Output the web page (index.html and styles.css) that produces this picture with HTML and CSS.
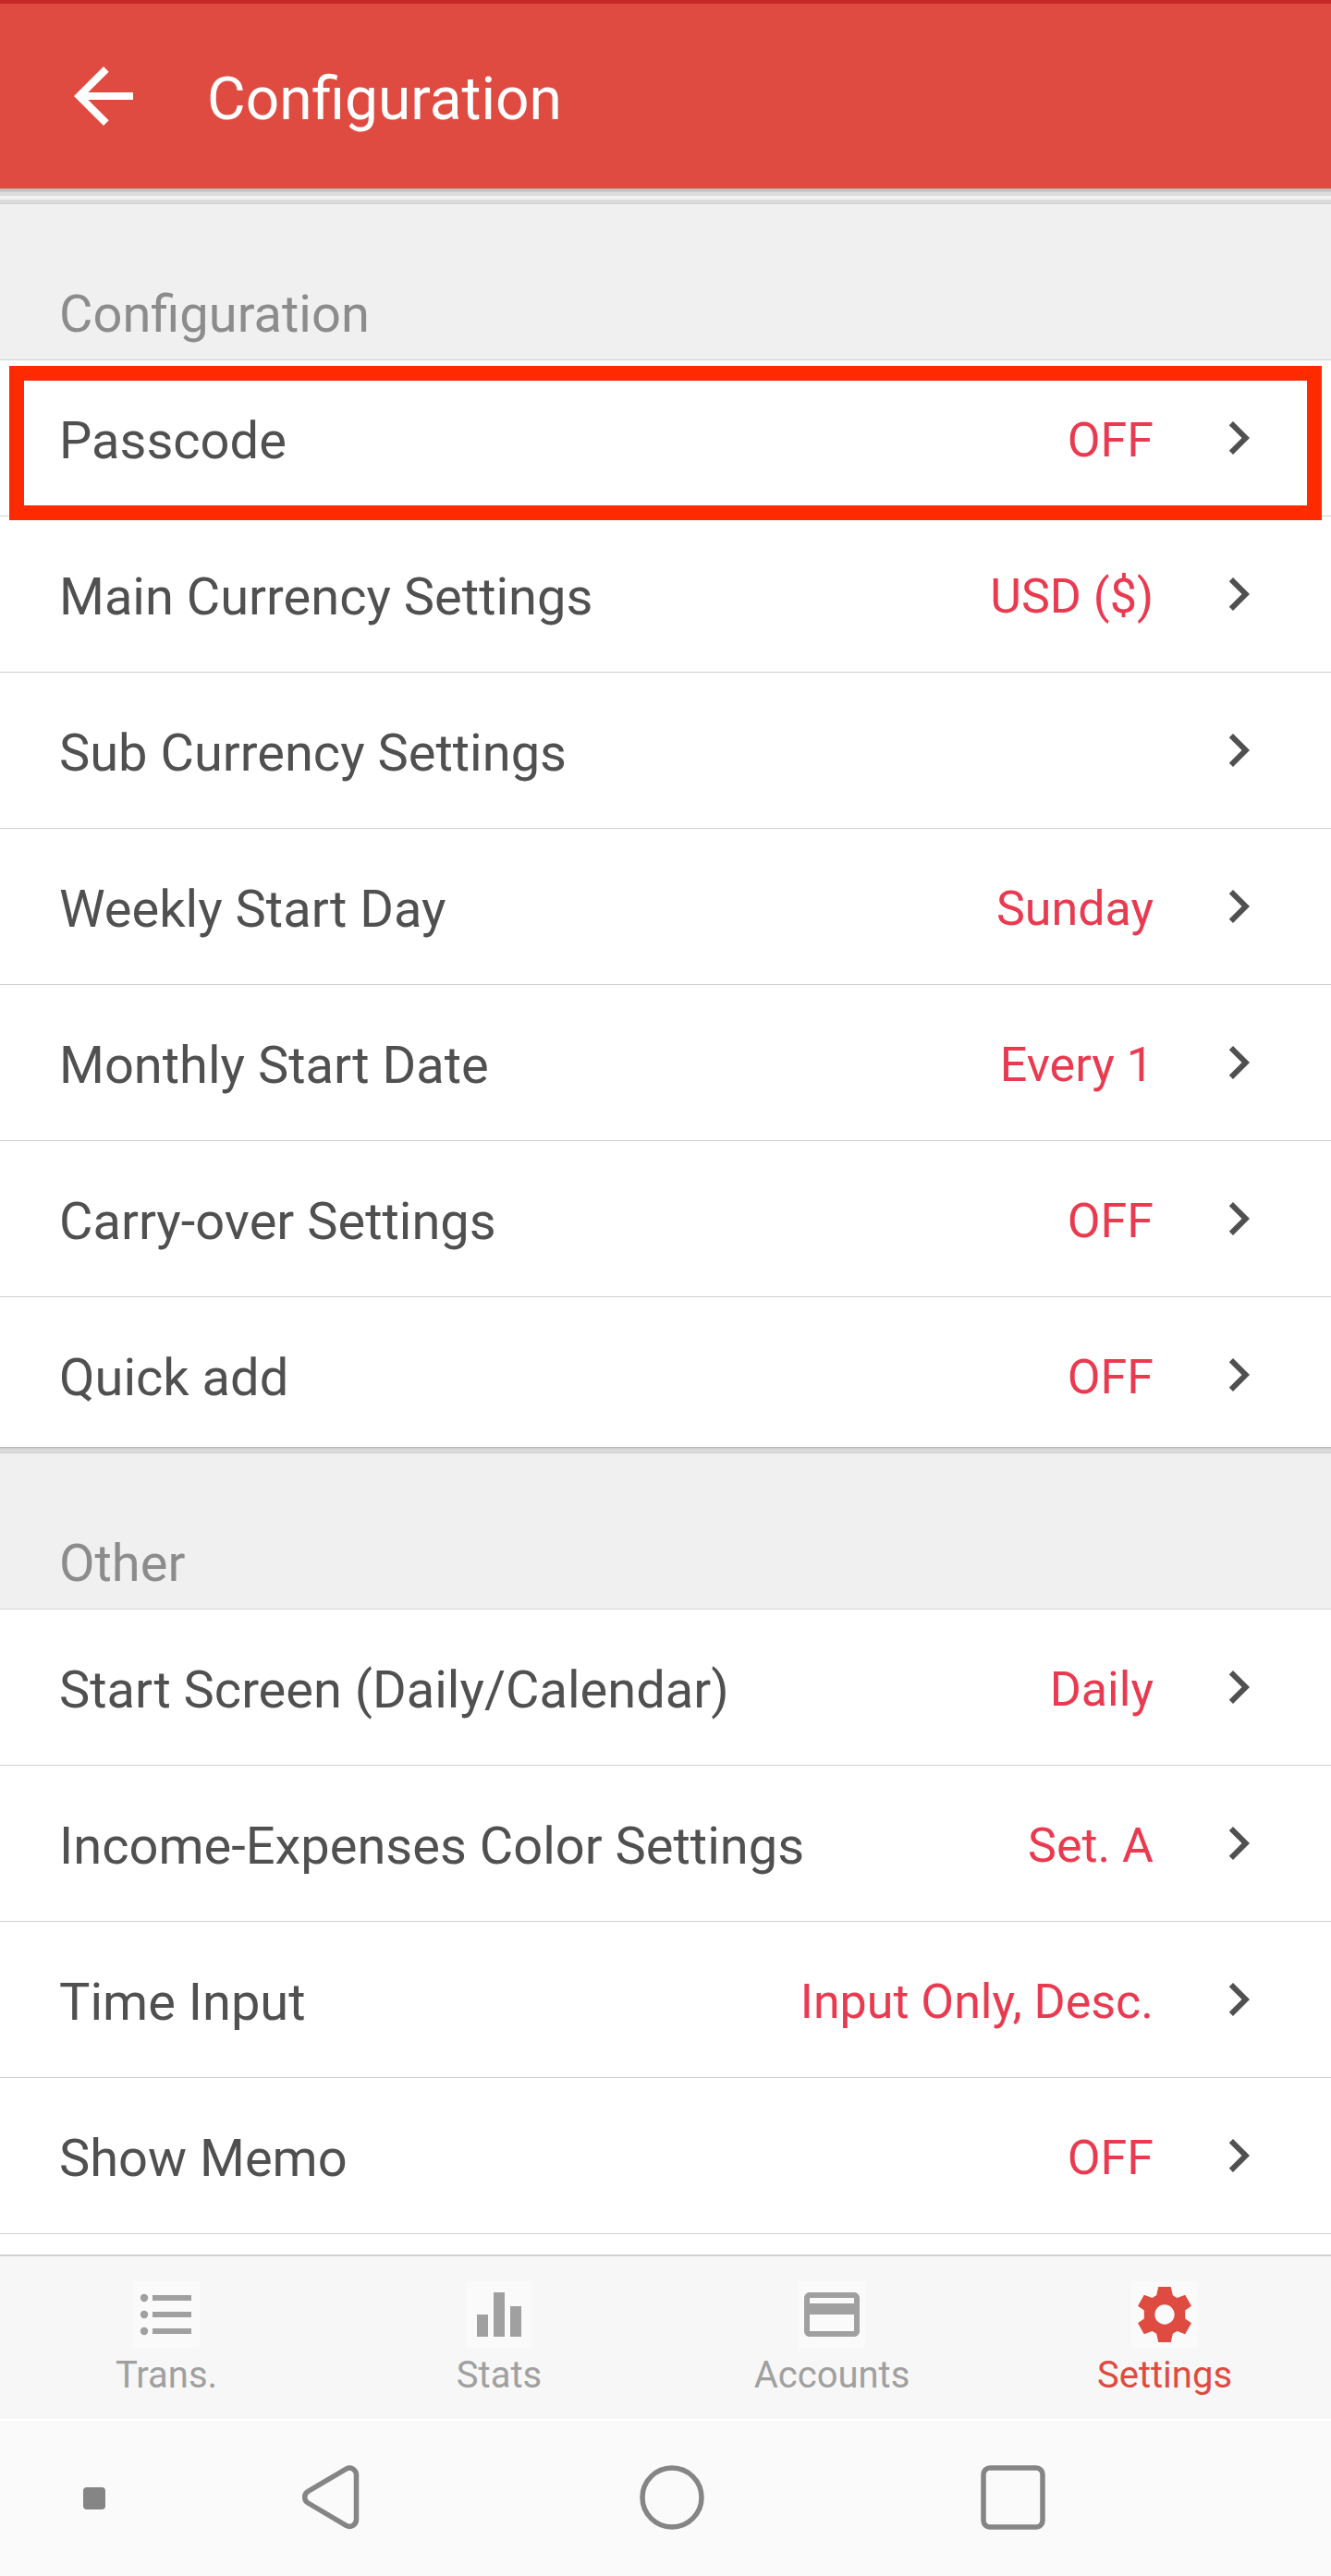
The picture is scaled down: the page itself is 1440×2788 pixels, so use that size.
FILE: index.html
```html
<!DOCTYPE html>
<html lang="en">
<head>
<meta charset="utf-8">
<title>Configuration</title>
<link rel="stylesheet" href="styles.css">
</head>
<body>
<svg class="defs" width="0" height="0" aria-hidden="true">
  <symbol id="chevron" viewBox="0 0 24 24"><path d="M10 6L8.59 7.41 13.17 12l-4.58 4.59L10 18l6-6z"/></symbol>
</svg>
<header class="app-bar">
  <svg class="back" viewBox="0 0 24 24"><path d="M20 11H7.83l5.59-5.59L12 4l-8 8 8 8 1.41-1.41L7.83 13H20v-2z"/></svg>
  <h1 class="title">Configuration</h1>
</header>
<main class="content">
  <div class="bar-shadow"></div>
  <section>
    <h2 class="section-title"><span>Configuration</span></h2>
    <ul class="list">
      <li class="row highlighted"><span class="label">Passcode</span><span class="value">OFF</span><svg class="chevron"><use href="#chevron"/></svg></li>
      <li class="row"><span class="label">Main Currency Settings</span><span class="value">USD ($)</span><svg class="chevron"><use href="#chevron"/></svg></li>
      <li class="row"><span class="label">Sub Currency Settings</span><span class="value"></span><svg class="chevron"><use href="#chevron"/></svg></li>
      <li class="row"><span class="label">Weekly Start Day</span><span class="value">Sunday</span><svg class="chevron"><use href="#chevron"/></svg></li>
      <li class="row"><span class="label">Monthly Start Date</span><span class="value">Every 1</span><svg class="chevron"><use href="#chevron"/></svg></li>
      <li class="row"><span class="label">Carry-over Settings</span><span class="value">OFF</span><svg class="chevron"><use href="#chevron"/></svg></li>
      <li class="row last"><span class="label">Quick add</span><span class="value">OFF</span><svg class="chevron"><use href="#chevron"/></svg></li>
    </ul>
  </section>
  <section>
    <h2 class="section-title divided"><span>Other</span></h2>
    <ul class="list">
      <li class="row"><span class="label">Start Screen (Daily/Calendar)</span><span class="value">Daily</span><svg class="chevron"><use href="#chevron"/></svg></li>
      <li class="row"><span class="label">Income-Expenses Color Settings</span><span class="value">Set. A</span><svg class="chevron"><use href="#chevron"/></svg></li>
      <li class="row"><span class="label">Time Input</span><span class="value">Input Only, Desc.</span><svg class="chevron"><use href="#chevron"/></svg></li>
      <li class="row"><span class="label">Show Memo</span><span class="value">OFF</span><svg class="chevron"><use href="#chevron"/></svg></li>
    </ul>
  </section>
</main>
<nav class="tabs">
  <a class="tab"><svg class="tab-icon" viewBox="0 0 24 24"><circle cx="4" cy="6" r="1.4"/><circle cx="4" cy="12" r="1.4"/><circle cx="4" cy="18" r="1.4"/><path d="M7 5h14v2H7zM7 11h14v2H7zM7 17h14v2H7z"/></svg><span>Trans.</span></a>
  <a class="tab"><svg class="tab-icon" viewBox="0 0 24 24"><path d="M10 20h4V4h-4v16zm-6 0h4v-8H4v8zM16 9v11h4V9h-4z"/></svg><span>Stats</span></a>
  <a class="tab"><svg class="tab-icon" viewBox="0 0 24 24"><path d="M20 4H4c-1.11 0-1.99.89-1.99 2L2 18c0 1.11.89 2 2 2h16c1.11 0 2-.89 2-2V6c0-1.11-.89-2-2-2zm0 14H4v-6h16v6zm0-10H4V6h16v2z"/></svg><span>Accounts</span></a>
  <a class="tab active"><svg class="tab-icon" viewBox="0 0 24 24"><path fill-rule="evenodd" d="M9.75 2h4.5L14.95 5.1 16.5 6 19.4 4.9 21.65 8.9 19.4 10.5v3L21.65 15.1 19.4 19.1 16.5 18 14.95 18.9 14.25 22h-4.5L9.05 18.9 7.5 18 4.6 19.1 2.35 15.1 4.6 13.5v-3L2.35 8.9 4.6 4.9 7.5 6 9.05 5.1zM12 8.45a3.55 3.55 0 1 0 0 7.1 3.55 3.55 0 0 0 0-7.1z"/></svg><span>Settings</span></a>
</nav>
<footer class="system-bar">
  <svg class="dot" viewBox="0 0 24 24"><rect width="24" height="24" rx="4"/></svg>
  <svg class="nav-back" viewBox="0 0 64 72"><path d="M48.5 5.1L7.3 29.400A7.300 7.300 0 0 0 7.300 42L48.500 66.300A7.300 7.300 0 0 0 59.500 60V11.400A7.300 7.300 0 0 0 48.500 5.100z"/></svg>
  <svg class="nav-home" viewBox="0 0 72 72"><circle cx="36" cy="36" r="32"/></svg>
  <svg class="nav-recent" viewBox="0 0 72 72"><rect x="4" y="4" width="64" height="64" rx="7"/></svg>
</footer>
</body>
</html>
```
FILE: styles.css
```css
*,
*::after {
  box-sizing: border-box;
}

body {
  margin: 0;
  width: 1440px;
  height: 2788px;
  display: flex;
  flex-direction: column;
  overflow: hidden;
  background: #fff;
  font-family: Roboto, "Noto Sans", sans-serif;
  color: #505050;
}

.defs {
  position: absolute;
}

.app-bar {
  height: 204px;
  flex: none;
  display: flex;
  align-items: center;
  gap: 64px;
  padding: 0 64px;
  background: #df4b41;
  border-top: 4px solid #c62828;
  color: #fff;
}

.back {
  width: 96px;
  height: 96px;
  fill: currentColor;
}

.title {
  margin: 8px 0 0;
  font-size: 64px;
  font-weight: 400;
  line-height: 76px;
}

.content {
  height: 2236px;
  flex: none;
  overflow: hidden;
}

.bar-shadow {
  height: 12px;
  background: linear-gradient(#bdbdbd 2px, #c8cac8 2px 4px, #dcdcdc 4px 8px, #f1f1f1 8px);
}

.section-title {
  height: 174px;
  margin: 0;
  padding: 91px 64px 0;
  font-size: 56px;
  font-weight: 400;
  line-height: 66px;
  color: #8c8c8c;
  border-bottom: 1px solid #d0d0d0;
  background: linear-gradient(#dadada 4px, #d0d0d0 4px 5px, #f0f0f0 5px);
}

.section-title.divided {
  height: 176px;
  padding-top: 93px;
  background: linear-gradient(#b8b8b8 1px, #cbcbcb 1px 2px, #dadada 2px 6px, #d0d0d0 6px 7px, #f0f0f0 7px);
}

.list {
  margin: 0;
  padding: 0;
  list-style: none;
}

.row {
  position: relative;
  height: 169px;
  display: flex;
  align-items: center;
  padding: 0 64px;
  border-bottom: 1px solid #d0d0d0;
}

.row.last {
  height: 162px;
  padding-top: 6px;
  border-bottom: 0;
}

.label {
  flex: 1;
  padding-top: 6px;
  font-size: 56px;
  line-height: 66px;
}

.value {
  padding-top: 6px;
  font-size: 52px;
  line-height: 62px;
  color: #ea3a50;
}

.chevron {
  width: 72px;
  height: 72px;
  margin-left: 56px;
  fill: #505050;
}

.highlighted::after {
  content: "";
  position: absolute;
  z-index: 1;
  top: 6px;
  left: 10px;
  width: 1420px;
  height: 167px;
  border: 16px solid #ff2a00;
}

.tabs {
  height: 180px;
  flex: none;
  display: grid;
  grid-template-columns: repeat(4, 1fr);
  background: #f7f7f7;
  border-top: 2px solid #d0d0d0;
  border-bottom: 2px solid #fff;
}

.tab {
  display: flex;
  flex-direction: column;
  align-items: center;
  padding-top: 27px;
  font-size: 40px;
  line-height: 48px;
  color: #a0a0a0;
}

.tab span {
  margin-top: 6px;
}

.tab.active {
  color: #df4b41;
}

.tab-icon {
  width: 72px;
  height: 72px;
  background: #fafafa;
  fill: currentColor;
}

.system-bar {
  height: 168px;
  flex: none;
  display: flex;
  align-items: center;
  padding: 0 0 2px 90px;
  background: #fafafa;
}

.system-bar svg {
  fill: none;
  stroke: #858585;
  stroke-width: 5.5px;
}

.system-bar .dot {
  width: 24px;
  height: 24px;
  margin-top: 2px;
  fill: #858585;
  stroke: none;
}

.nav-back {
  width: 64px;
  height: 72px;
  margin-left: 212px;
}

.nav-home {
  width: 72px;
  height: 72px;
  margin-left: 301px;
}

.nav-recent {
  width: 72px;
  height: 72px;
  margin-left: 297px;
}
```
